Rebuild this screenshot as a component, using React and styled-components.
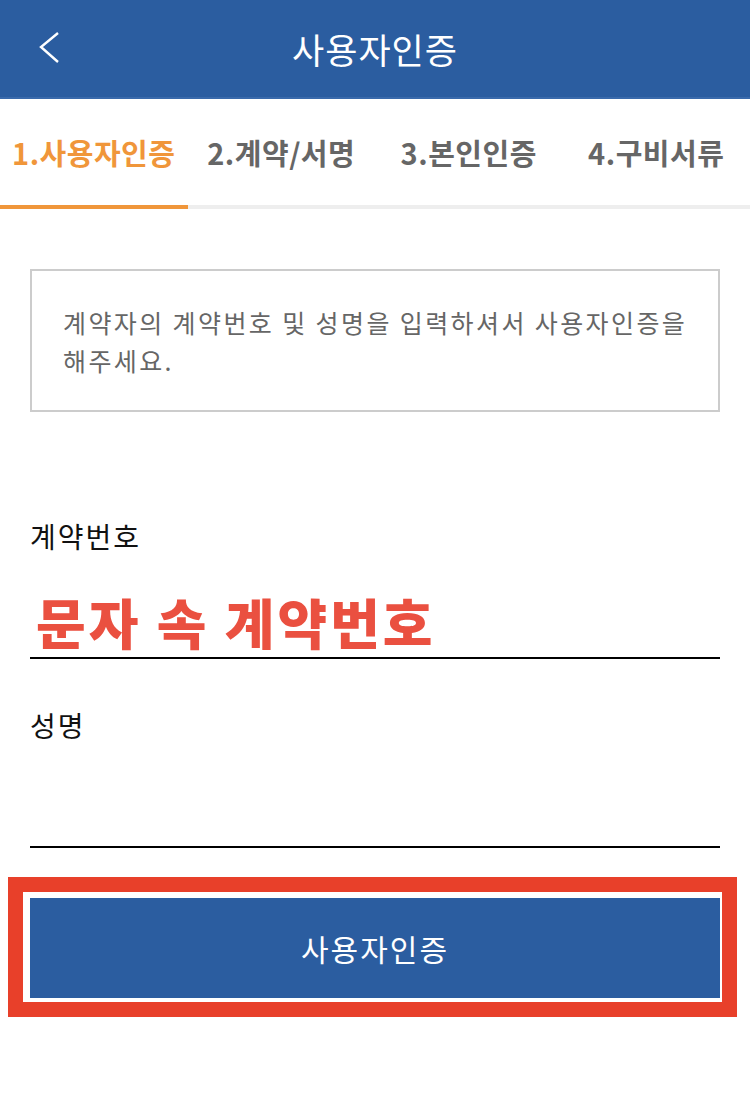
import React from 'react'
import styled, { createGlobalStyle } from 'styled-components'

const GlobalStyle = createGlobalStyle`
  html, body {
    margin: 0;
    padding: 0;
    background: #fff;
  }
  body {
    font-family: "Noto Sans CJK KR", "Noto Sans", sans-serif;
  }
`

const Page = styled.div`
  width: 750px;
  min-height: 1094px;
  background: #fff;
`

const Header = styled.header`
  position: relative;
  height: 97px;
  background: #2b5da0;
  border-bottom: 2px solid #3a6aab;
  display: flex;
  align-items: center;
  justify-content: center;
`

const BackButton = styled.button`
  position: absolute;
  left: 30px;
  top: 24px;
  width: 40px;
  height: 48px;
  padding: 0;
  border: 0;
  background: transparent;
  display: flex;
  align-items: center;
  justify-content: center;
`

const Title = styled.h1`
  margin: 0;
  color: #fff;
  font-size: 35px;
  font-weight: 400;
  letter-spacing: 1px;
  line-height: 1;
`

const Tabs = styled.nav`
  display: grid;
  grid-template-columns: repeat(4, 1fr);
  border-bottom: 4px solid #eeeeee;
`

const Tab = styled.div`
  height: 106px;
  margin-bottom: -4px;
  display: flex;
  align-items: center;
  justify-content: center;
  font-size: 29px;
  font-weight: 700;
  letter-spacing: 0.5px;
  color: ${p => (p.active ? '#f0963a' : '#666')};
  border-bottom: 4px solid ${p => (p.active ? '#f0963a' : 'transparent')};
`

const Body = styled.div`
  padding: 60px 30px 0;
`

const Notice = styled.p`
  margin: 0;
  height: 143px;
  box-sizing: border-box;
  border: 2px solid #cccccc;
  padding: 32px 20px 0 31px;
  font-size: 25px;
  letter-spacing: 2.4px;
  line-height: 38px;
  color: #666;
`

const Field = styled.div`
  margin-top: ${p => p.gap}px;
`

const Label = styled.div`
  font-size: 28px;
  letter-spacing: 2px;
  line-height: 40px;
  color: #111;
`

const InputRow = styled.div`
  height: 93px;
  border-bottom: 2px solid #000;
  display: flex;
  align-items: flex-end;
  padding: 0 0 8px 6px;
`

const Value = styled.span`
  font-size: 54px;
  line-height: 54px;
  font-weight: 900;
  letter-spacing: 3px;
  color: #ea5040;
`

const Highlight = styled.div`
  margin: 29px 13px 0 8px;
  border: 15px solid #e8402a;
  padding: 6px 2px 4px 7px;
`

const SubmitButton = styled.button`
  display: flex;
  width: 100%;
  height: 100px;
  border: 0;
  background: #2b5da0;
  color: #fff;
  font-family: inherit;
  font-size: 30px;
  letter-spacing: 2px;
  align-items: center;
  justify-content: center;
`

const steps = ['1.사용자인증', '2.계약/서명', '3.본인인증', '4.구비서류']

export default function App() {
  return (
    <Page>
      <GlobalStyle />
      <Header>
        <BackButton aria-label="뒤로">
          <svg width="22" height="34" viewBox="0 0 22 34">
            <polyline
              points="19,2 2,16 19,31"
              fill="none"
              stroke="#fff"
              strokeWidth="2.4"
            />
          </svg>
        </BackButton>
        <Title>사용자인증</Title>
      </Header>
      <Tabs>
        {steps.map((s, i) => (
          <Tab key={s} active={i === 0}>{s}</Tab>
        ))}
      </Tabs>
      <Body>
        <Notice>
          계약자의 계약번호 및 성명을 입력하셔서 사용자인증을 해주세요.
        </Notice>
        <Field gap={104}>
          <Label>계약번호</Label>
          <InputRow>
            <Value>문자 속 계약번호</Value>
          </InputRow>
        </Field>
        <Field gap={46}>
          <Label>성명</Label>
          <InputRow />
        </Field>
      </Body>
      <Highlight>
        <SubmitButton>사용자인증</SubmitButton>
      </Highlight>
    </Page>
  )
}
